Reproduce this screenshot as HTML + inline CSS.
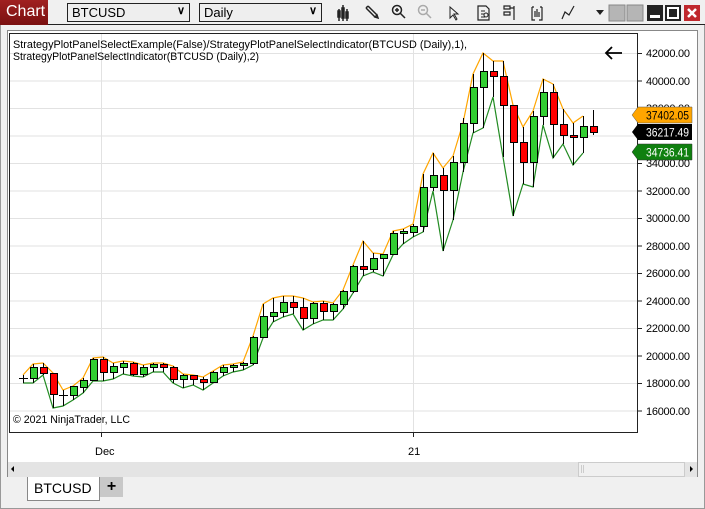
<!DOCTYPE html>
<html><head><meta charset="utf-8"><style>
*{margin:0;padding:0;box-sizing:border-box}
body{width:705px;height:509px;background:#f0f0f0;font-family:"Liberation Sans",sans-serif;position:relative;overflow:hidden}
.abs{position:absolute}
.dd{position:absolute;top:3px;height:19px;border:1px solid #222;background:#eee;font-size:13px;padding:1px 4px;color:#000}
.dd span{position:absolute;right:4px;top:0px;font-size:11px;font-weight:bold}
</style></head><body>
<div class="abs" style="left:0;top:0;width:705px;height:509px;border:1px solid #999"></div>
<div class="abs" style="left:0;top:0;width:705px;height:25px;background:#f0f0f0;border-bottom:1px solid #222"></div>
<div class="abs" style="left:0;top:0;width:48px;height:25px;background:linear-gradient(#a02020,#7a1010);color:#fff;font-size:16px;padding:3px 0 0 6px">Chart</div>
<div class="dd" style="left:67px;width:123px">BTCUSD<span>&#x2228;</span></div>
<div class="dd" style="left:199px;width:123px">Daily<span>&#x2228;</span></div>
<svg class="abs" style="left:330px;top:0" width="375" height="25" viewBox="330 0 375 25">
 <g stroke="#222" stroke-width="1.5" fill="none">
  <path d="M339 9v12M343 5v16M347 9v12"/><rect x="338" y="11" width="2" height="6" fill="#222"/><rect x="342" y="8" width="2" height="10" fill="#222"/><rect x="346" y="12" width="2" height="6" fill="#222"/>
  <path d="M366 8l9 9M368 6l9 9M366 8l2-2M375 17l2-2l1 3z"/>
  <circle cx="397" cy="10" r="4.5"/><path d="M400 13l5 5M395 10h4M397 8v4"/>
  <g stroke="#aaa"><circle cx="423" cy="10" r="4.5"/><path d="M426 13l5 5M421 10h4"/></g>
  <path d="M450 7l0 11l3-3l3 5l1-1l-3-5h4z" stroke-width="1"/>
  <path d="M478 6h8l3 3v11h-11z" stroke-width="1.2"/><path d="M481 11h4M481 14h3M481 17h4" stroke-width="1"/><circle cx="486" cy="15" r="2" stroke-width="1"/>
  <path d="M504 6h6v3h-6zM504 12h6v3h-6zM510 8h4M514 6v14" stroke-width="1.2"/>
  <path d="M532 7v13h3M542 7v13h-3M534 7h-2M540 7h2" stroke-width="1.2"/><path d="M535 11v6M537 9v8M539 12v5" stroke-width="1.2"/>
  <path d="M562 19l3-7l4 3l5-9" stroke-width="1.2"/>
 </g>
 <path d="M596 10h8l-4 5z" fill="#222"/>
 <rect x="609" y="5" width="16" height="16" fill="#b5b5b5" stroke="#888"/>
 <rect x="627" y="5" width="16" height="16" fill="#b5b5b5" stroke="#888"/>
 <rect x="647" y="5" width="16" height="16" fill="#222"/><rect x="650" y="15" width="10" height="3" fill="#fff"/>
 <rect x="665" y="5" width="16" height="16" fill="#222"/><rect x="668" y="8" width="10" height="10" fill="none" stroke="#fff" stroke-width="2"/>
 <rect x="684" y="5" width="16" height="16" fill="#c0282d"/><path d="M688 9l8 8M696 9l-8 8" stroke="#fff" stroke-width="2.5"/>
</svg>
<div class="abs" style="left:7px;top:30px;width:691px;height:447px;background:#fff;border:1px solid #888"></div>
<svg class="abs" style="left:0;top:0" width="705" height="509" viewBox="0 0 705 509" font-family="Liberation Sans, sans-serif">
 <g stroke="#e2e2e2" stroke-width="1">
  <path d="M10 53.5H637M10 81H637M10 108.5H637M10 136H637M10 163.5H637M10 191H637M10 218.5H637M10 246H637M10 273.5H637M10 301H637M10 328.5H637M10 356H637M10 383.5H637M10 411H637"/>
  <path d="M101.5 33V432M413.5 33V432"/>
 </g>
 <rect x="9.5" y="33.5" width="628" height="399" fill="none" stroke="#222"/>
 <g stroke="#222"><path d="M637 53.5h5M637 81h5M637 108.5h5M637 136h5M637 163.5h5M637 191h5M637 218.5h5M637 246h5M637 273.5h5M637 301h5M637 328.5h5M637 356h5M637 383.5h5M637 411h5M101.5 432v5M413.5 432v5"/></g>
 <g font-size="11" fill="#000">
  <g lengthAdjust="spacingAndGlyphs">
  <text x="646" y="57" textLength="44">42000.00</text><text x="646" y="85" textLength="44">40000.00</text><text x="646" y="112" textLength="44">38000.00</text><text x="646" y="140" textLength="44">36000.00</text><text x="646" y="167" textLength="44">34000.00</text><text x="646" y="195" textLength="44">32000.00</text><text x="646" y="222" textLength="44">30000.00</text><text x="646" y="250" textLength="44">28000.00</text><text x="646" y="277" textLength="44">26000.00</text><text x="646" y="305" textLength="44">24000.00</text><text x="646" y="332" textLength="44">22000.00</text><text x="646" y="360" textLength="44">20000.00</text><text x="646" y="387" textLength="44">18000.00</text><text x="646" y="415" textLength="44">16000.00</text>
  </g>
  <text x="95" y="455">Dec</text><text x="408" y="455">21</text>
  <text x="13" y="48" textLength="454" lengthAdjust="spacingAndGlyphs">StrategyPlotPanelSelectExample(False)/StrategyPlotPanelSelectIndicator(BTCUSD (Daily),1),</text>
  <text x="13" y="60" textLength="246" lengthAdjust="spacingAndGlyphs">StrategyPlotPanelSelectIndicator(BTCUSD (Daily),2)</text>
  <text x="13" y="423" textLength="117" lengthAdjust="spacingAndGlyphs">© 2021 NinjaTrader, LLC</text>
 </g>
 <path d="M622 53H606M612 47l-6 6l6 6" stroke="#000" stroke-width="1.8" fill="none"/>
 <polyline fill="none" stroke="#ffa500" stroke-width="1.2" points="23,375 33,364 43,363 53,373 63,390 73,386 83,378 93,358 103,357 113,363 123,361 133,362 143,365 153,363 163,363 173,366 183,374 193,375 203,377 213,371 223,365 233,364 243,362 253,336 263,304 273,298 283,296 293,296 303,298 313,302 323,301 333,303 343,290 353,265 363,241 373,253 383,254 393,231 403,229 413,224 423,174 433,153 443,168 453,156 463,123 473,74 483,53 493,61 503,61 513,105 523,127 533,111 543,79 553,84 563,109 573,123 583,116"/>
 <polyline fill="none" stroke="#228b22" stroke-width="1.2" points="23,383 33,383 43,375 53,408 63,406 73,400 83,393 93,381 103,381 113,379 123,374 133,376 143,377 153,372 163,372 173,383 183,388 193,385 203,390 213,383 223,376 233,372 243,370 253,365 263,338 273,322 283,317 293,314 303,330 313,324 323,320 333,320 343,309 353,293 363,276 373,272 383,276 393,255 403,244 413,237 423,232 433,191 443,251 453,220 463,172 473,133 483,128 493,97 503,157 513,216 523,184 533,187 543,125 553,158 563,144 573,165 583,153"/>
 <g stroke="#000" stroke-width="1">
  <path d="M23.5 375V383M19 378.5H28M33.5 364V383M43.5 363V375M53.5 373V408M63.5 390V406M59 395.5H68M73.5 386V400M83.5 378V393M93.5 358V381M103.5 357V381M113.5 363V379M123.5 361V374M133.5 362V376M143.5 365V377M153.5 363V372M163.5 363V372M173.5 366V383M183.5 374V388M193.5 375V385M203.5 377V390M213.5 371V383M223.5 365V376M233.5 364V372M243.5 362V370M253.5 336V365M263.5 304V338M273.5 298V322M283.5 296V317M293.5 296V314M303.5 298V330M313.5 302V324M323.5 301V320M333.5 303V320M343.5 290V309M353.5 265V293M363.5 241V276M373.5 253V272M383.5 254V276M393.5 231V255M403.5 229V244M413.5 224V237M423.5 174V232M433.5 153V191M443.5 168V251M453.5 156V220M463.5 118V172M473.5 74V133M483.5 53V128M493.5 61V97M503.5 61V157M513.5 105V216M523.5 127V184M533.5 111V187M543.5 79V125M553.5 84V158M563.5 109V144M573.5 123V165M583.5 116V153M593.5 110V135"/>
 </g>
 <g stroke="#000" stroke-width="1">
  <g fill="#32cd32">
   <rect x="30.5" y="367.5" width="7" height="11"/><rect x="70.5" y="386.5" width="7" height="9"/><rect x="80.5" y="380.5" width="7" height="7"/><rect x="90.5" y="359.5" width="7" height="21"/><rect x="110.5" y="366.5" width="7" height="6"/><rect x="120.5" y="363.5" width="7" height="4"/><rect x="140.5" y="367.5" width="7" height="7"/><rect x="150.5" y="364.5" width="7" height="3"/><rect x="180.5" y="375.5" width="7" height="4"/><rect x="210.5" y="372.5" width="7" height="10"/><rect x="220.5" y="367.5" width="7" height="5"/><rect x="230.5" y="365.5" width="7" height="2"/><rect x="240.5" y="363.5" width="7" height="2"/><rect x="250.5" y="337.5" width="7" height="26"/><rect x="260.5" y="316.5" width="7" height="21"/><rect x="270.5" y="312.5" width="7" height="4"/><rect x="280.5" y="302.5" width="7" height="10"/><rect x="310.5" y="303.5" width="7" height="15"/><rect x="330.5" y="304.5" width="7" height="7"/><rect x="340.5" y="291.5" width="7" height="13"/><rect x="350.5" y="266.5" width="7" height="25"/><rect x="370.5" y="258.5" width="7" height="11"/><rect x="380.5" y="254.5" width="7" height="4"/><rect x="390.5" y="233.5" width="7" height="21"/><rect x="400.5" y="231.5" width="7" height="2"/><rect x="410.5" y="226.5" width="7" height="6"/><rect x="420.5" y="187.5" width="7" height="39"/><rect x="430.5" y="175.5" width="7" height="12"/><rect x="450.5" y="162.5" width="7" height="28"/><rect x="460.5" y="123.5" width="7" height="39"/><rect x="470.5" y="87.5" width="7" height="36"/><rect x="480.5" y="71.5" width="7" height="16"/><rect x="530.5" y="116.5" width="7" height="46"/><rect x="540.5" y="92.5" width="7" height="24"/><rect x="580.5" y="126.5" width="7" height="11"/>
  </g>
  <g fill="#ff0000">
   <rect x="40.5" y="367.5" width="7" height="6"/><rect x="50.5" y="373.5" width="7" height="21"/><rect x="100.5" y="359.5" width="7" height="13"/><rect x="130.5" y="363.5" width="7" height="11"/><rect x="160.5" y="364.5" width="7" height="3"/><rect x="170.5" y="367.5" width="7" height="12"/><rect x="190.5" y="375.5" width="7" height="4"/><rect x="200.5" y="379.5" width="7" height="3"/><rect x="290.5" y="302.5" width="7" height="5"/><rect x="300.5" y="307.5" width="7" height="11"/><rect x="320.5" y="303.5" width="7" height="8"/><rect x="360.5" y="266.5" width="7" height="3"/><rect x="440.5" y="175.5" width="7" height="15"/><rect x="490.5" y="71.5" width="7" height="5"/><rect x="500.5" y="76.5" width="7" height="29"/><rect x="510.5" y="105.5" width="7" height="37"/><rect x="520.5" y="142.5" width="7" height="20"/><rect x="550.5" y="92.5" width="7" height="32"/><rect x="560.5" y="124.5" width="7" height="11"/><rect x="570.5" y="135.5" width="7" height="2"/><rect x="590.5" y="126.5" width="7" height="6"/>
  </g>
 </g>
 <path d="M638 107H692V123H638L632 115Z" fill="#ffa500" stroke="#555" stroke-width=".5"/><text x="646" y="119.5" font-size="11.5" fill="#000" textLength="43" lengthAdjust="spacingAndGlyphs">37402.05</text>
 <path d="M638 124H692V140H638L632 132Z" fill="#000"/><text x="646" y="136.5" font-size="11.5" fill="#fff" textLength="43" lengthAdjust="spacingAndGlyphs">36217.49</text>
 <path d="M638 144H692V160H638L632 152Z" fill="#0f800f" stroke="#333" stroke-width=".5"/><text x="646" y="156.5" font-size="11.5" fill="#fff" textLength="43" lengthAdjust="spacingAndGlyphs">34736.41</text>
 <rect x="8" y="462" width="689" height="15" fill="#e4e4e4"/>
 <rect x="578.5" y="462.5" width="106" height="14" fill="#f0f0f0" stroke="#ccc"/>
 <path d="M581.5 465v8M583.5 465v8" stroke="#ccc"/>
 <path d="M14 466v6l-3-3z" fill="#000"/><path d="M690 466v6l3-3z" fill="#000"/>
</svg>
<div class="abs" style="left:27px;top:477px;width:73px;height:24px;background:#fff;border:1px solid #888;border-top:none;font-size:14px;padding:3px 0 0 6px">BTCUSD</div>
<div class="abs" style="left:100px;top:477px;width:23px;height:20px;background:#c8c8c8;font-size:16px;font-weight:bold;text-align:center;line-height:20px">+</div>
</body></html>
